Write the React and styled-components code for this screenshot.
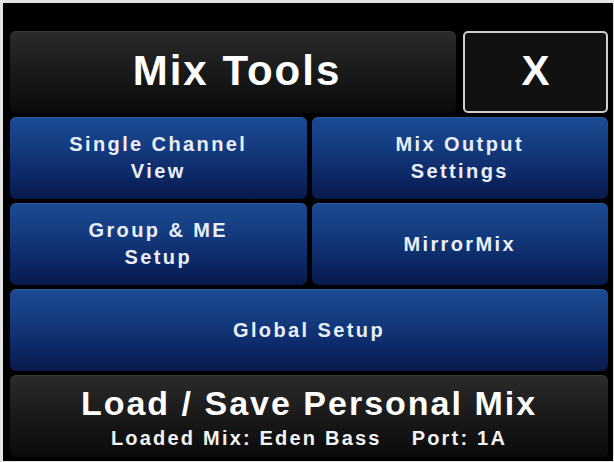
import React from 'react';
import styled, { createGlobalStyle, css } from 'styled-components';

const GlobalStyle = createGlobalStyle`
  html, body {
    margin: 0;
    padding: 0;
    background: #ededed;
  }
  * {
    box-sizing: border-box;
  }
`;

// Bezel around the touch screen
const Frame = styled.div`
  width: 614px;
  height: 462px;
  padding: 3px 1px 1px 3px;
  background: #e4e4e4;
`;

const Screen = styled.div`
  width: 100%;
  height: 100%;
  background: #000;
  padding: 28px 5px 3px 7px;
  display: grid;
  grid-template-rows: repeat(5, 82px);
  row-gap: 4px;
  font-family: "Liberation Sans", Arial, sans-serif;
  font-weight: 700;
  color: #fff;
`;

const HeaderRow = styled.div`
  display: flex;
  gap: 7px;
`;

const darkPanel = css`
  border-radius: 6px;
  background: linear-gradient(180deg, #2b2b2b 0%, #1b1b1b 45%, #0a0a0a 100%);
  box-shadow: inset 0 1px 0 rgba(255, 255, 255, 0.07);
`;

const TitlePanel = styled.div`
  ${darkPanel};
  flex: 1;
  display: flex;
  align-items: center;
  justify-content: center;
  font-size: 42px;
  letter-spacing: 2px;
  padding: 0 0 2px 8px;
`;

const CloseButton = styled.button`
  width: 145px;
  border: 2px solid #cfcfcf;
  border-radius: 5px;
  background: #111;
  color: #fff;
  font-family: inherit;
  font-weight: 700;
  font-size: 42px;
  display: flex;
  align-items: center;
  justify-content: center;
  padding: 0 0 2px;
  cursor: pointer;
`;

const ButtonRow = styled.div`
  display: grid;
  grid-template-columns: 1fr 1fr;
  column-gap: 5px;
`;

const MenuButton = styled.button`
  border: none;
  border-radius: 6px;
  background: linear-gradient(180deg, #1c4b94 0%, #143c80 35%, #0d2968 70%, #08194b 100%);
  box-shadow: inset 0 1px 0 rgba(110, 150, 220, 0.22);
  color: #e9eefa;
  font-family: inherit;
  font-weight: 700;
  font-size: 20px;
  line-height: 27px;
  letter-spacing: 2.4px;
  text-align: center;
  display: flex;
  align-items: center;
  justify-content: center;
  padding: 2px 0 2px;
  cursor: pointer;
`;

const MixPanel = styled.div`
  ${darkPanel};
  display: flex;
  flex-direction: column;
  align-items: center;
  justify-content: center;
  gap: 6px;
  padding-top: 2px;
`;

const MixTitle = styled.div`
  font-size: 34px;
  letter-spacing: 2px;
  line-height: 36px;
`;

const MixInfo = styled.div`
  display: flex;
  gap: 30px;
  font-size: 20px;
  letter-spacing: 2.2px;
  line-height: 22px;
  color: #f2f2f2;
`;

const menu = [
  ['Single Channel', 'View'],
  ['Mix Output', 'Settings'],
  ['Group & ME', 'Setup'],
  ['MirrorMix'],
];

function Label({ lines }) {
  return lines.map((l, i) => (
    <React.Fragment key={l}>
      {i > 0 && <br />}
      {l}
    </React.Fragment>
  ));
}

export default function App() {
  return (
    <>
      <GlobalStyle />
      <Frame>
        <Screen>
          <HeaderRow>
            <TitlePanel>Mix Tools</TitlePanel>
            <CloseButton>X</CloseButton>
          </HeaderRow>

          <ButtonRow>
            {menu.slice(0, 2).map((lines) => (
              <MenuButton key={lines.join(' ')}>
                <span><Label lines={lines} /></span>
              </MenuButton>
            ))}
          </ButtonRow>

          <ButtonRow>
            {menu.slice(2).map((lines) => (
              <MenuButton key={lines.join(' ')}>
                <span><Label lines={lines} /></span>
              </MenuButton>
            ))}
          </ButtonRow>

          <MenuButton>Global Setup</MenuButton>

          <MixPanel>
            <MixTitle>Load / Save Personal Mix</MixTitle>
            <MixInfo>
              <span>Loaded Mix: Eden Bass</span>
              <span>Port: 1A</span>
            </MixInfo>
          </MixPanel>
        </Screen>
      </Frame>
    </>
  );
}
